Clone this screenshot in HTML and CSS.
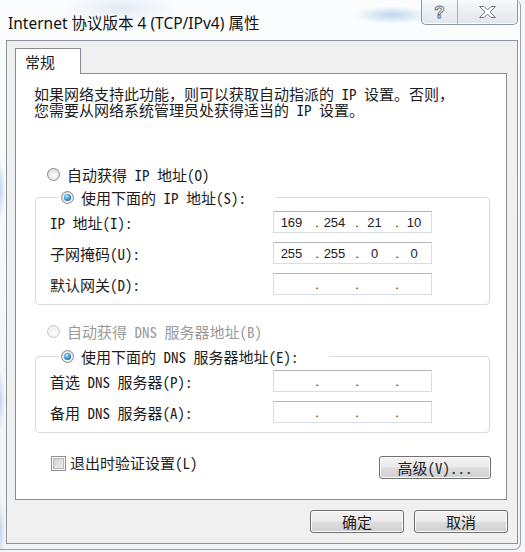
FILE: index.html
```html
<!DOCTYPE html>
<html lang="zh-CN">
<head>
<meta charset="utf-8">
<title>Internet 协议版本 4 (TCP/IPv4) 属性</title>
<link rel="stylesheet" href="styles.css">
</head>
<body>
<div class="window">
  <div class="titlebar">
    <span class="title">Internet 协议版本 4 (TCP/IPv4) 属性</span>
    <div class="caption">
      <span class="cap help"><span class="q">?</span></span>
      <span class="cap close">
        <svg width="17" height="12" viewBox="0 0 17 12"><polygon points="0.5,0.5 5,0.5 8.5,4 12,0.5 16.5,0.5 11,6 16.5,11.5 12,11.5 8.5,8 5,11.5 0.5,11.5 6,6" fill="#ffffff" stroke="#6e7782" stroke-width="1" stroke-linejoin="round"/></svg>
      </span>
    </div>
  </div>
  <div class="client">
    <div class="tabs"><div class="tab">常规</div></div>
    <div class="panel">
      <p class="desc">如果网络支持此功能<span class="fw">，</span>则可以获取自动指派的 IP 设置。否则<span class="fw">，</span><br>您需要从网络系统管理员处获得适当的 IP 设置。</p>

      <div class="radio first"><span class="rb"></span>自动获得 IP 地址(O)</div>
      <fieldset class="group g1">
        <legend><span class="radio"><span class="rb on"></span>使用下面的 IP 地址(S):</span></legend>
        <div class="row"><span class="lbl">IP 地址(I):</span>
          <div class="ip"><span class="seg s1">169</span><span class="dot">.</span><span class="seg">254</span><span class="dot">.</span><span class="seg">21</span><span class="dot">.</span><span class="seg s4">10</span></div></div>
        <div class="row"><span class="lbl">子网掩码(U):</span>
          <div class="ip"><span class="seg s1">255</span><span class="dot">.</span><span class="seg">255</span><span class="dot">.</span><span class="seg">0</span><span class="dot">.</span><span class="seg s4">0</span></div></div>
        <div class="row"><span class="lbl">默认网关(D):</span>
          <div class="ip"><span class="seg s1"></span><span class="dot">.</span><span class="seg"></span><span class="dot">.</span><span class="seg"></span><span class="dot">.</span><span class="seg s4"></span></div></div>
      </fieldset>

      <div class="radio second disabled"><span class="rb dis"></span>自动获得 DNS 服务器地址(B)</div>
      <fieldset class="group g2">
        <legend><span class="radio"><span class="rb on"></span>使用下面的 DNS 服务器地址(E):</span></legend>
        <div class="row"><span class="lbl">首选 DNS 服务器(P):</span>
          <div class="ip"><span class="seg s1"></span><span class="dot">.</span><span class="seg"></span><span class="dot">.</span><span class="seg"></span><span class="dot">.</span><span class="seg s4"></span></div></div>
        <div class="row"><span class="lbl">备用 DNS 服务器(A):</span>
          <div class="ip"><span class="seg s1"></span><span class="dot">.</span><span class="seg"></span><span class="dot">.</span><span class="seg"></span><span class="dot">.</span><span class="seg s4"></span></div></div>
      </fieldset>

      <div class="options">
        <span class="check"><span class="cb"></span>退出时验证设置(L)</span>
        <button class="btn adv">高级(V)...</button>
      </div>
    </div>
    <div class="footer">
      <button class="btn foot">确定</button>
      <button class="btn foot">取消</button>
    </div>
  </div>
</div>
</body>
</html>
```
FILE: styles.css
```css
* { box-sizing: border-box; }
html, body { margin: 0; padding: 0; }
body {
  width: 525px;
  height: 552px;
  overflow: hidden;
  background: #f3f5f7;
  font-family: "Noto Sans CJK SC", sans-serif;
  font-feature-settings: "hwid" 1;
  font-size: 15px;
  color: #1c1c1c;
}
.fw { font-feature-settings: normal; }
.window {
  width: 521px;
  height: 550px;
  padding: 0 2px 5px 6px;
  border-right: 1px solid #9aa2ab;
  border-bottom: 1px solid #9aa2ab;
  border-radius: 0 6px 7px 0;
  display: flex;
  flex-direction: column;
  background:
    radial-gradient(ellipse 38px 9px at 392px 15px, rgba(140, 185, 225, 0.55), rgba(140, 185, 225, 0) 100%),
    radial-gradient(ellipse 60px 14px at 120px 8px, rgba(200, 220, 238, 0.5), rgba(200, 220, 238, 0) 100%),
    radial-gradient(ellipse 5px 30px at 0px 190px, rgba(120, 170, 215, 0.45), rgba(120, 170, 215, 0) 100%),
    radial-gradient(ellipse 5px 30px at 0px 400px, rgba(120, 170, 215, 0.4), rgba(120, 170, 215, 0) 100%),
    radial-gradient(ellipse 5px 30px at 0px 530px, rgba(120, 170, 215, 0.4), rgba(120, 170, 215, 0) 100%),
    linear-gradient(#fbfcfd, #f1f3f5);
}
.titlebar {
  height: 40px;
  flex: none;
  display: flex;
  justify-content: space-between;
  align-items: flex-start;
}
.title {
  font-family: "Noto Sans", "Noto Sans CJK SC", sans-serif;
  font-feature-settings: normal;
  font-size: 15.5px;
  line-height: 20px;
  margin: 13px 0 0 2px;
  color: #111;
  text-shadow: 0 0 6px #fff, 0 0 3px #fff;
}
.caption {
  display: flex;
  height: 25px;
  border: 1px solid #8e97a2;
  border-top: none;
  border-radius: 0 0 5px 5px;
  overflow: hidden;
  background: linear-gradient(#f7f9fb, #e9edf1 60%, #e2e7ec);
  box-shadow: inset 0 -1px 0 #fff;
}
.cap {
  display: flex;
  align-items: center;
  justify-content: center;
}
.cap.help {
  width: 36px;
  border-right: 1px solid #a8b0b9;
}
.cap.close { width: 59px; }
.q {
  font-family: "Liberation Sans", sans-serif;
  font-weight: bold;
  font-size: 17px;
  line-height: 17px;
  color: #fff;
  -webkit-text-stroke: 1px #6e7782;
}
.client {
  flex: 1;
  background: #f0f0f0;
  border: 1px solid #8d949c;
  display: flex;
  flex-direction: column;
}
.tabs {
  padding: 7px 0 0 8px;
  display: flex;
}
.tab {
  position: relative;
  z-index: 1;
  width: 66px;
  height: 26px;
  margin-bottom: -1px;
  padding: 0 0 0 9px;
  line-height: 26px;
  background: #fff;
  border: 1px solid #898c95;
  border-bottom: none;
}
.panel {
  height: 427px;
  margin: 0 10px 0 8px;
  background: #fff;
  border: 1px solid #898c95;
  padding: 12px 0 0 18px;
}
.desc {
  margin: 0;
  line-height: 16px;
  white-space: nowrap;
}
.radio {
  display: flex;
  align-items: center;
  height: 17px;
  line-height: 17px;
  white-space: nowrap;
}
.radio.first { margin-top: 48px; padding-left: 13px; }
.radio.second { margin-top: 18px; padding-left: 13px; }
.radio.disabled { color: #9a9a9a; }
.rb {
  flex: none;
  width: 13px;
  height: 13px;
  margin-right: 7px;
  border-radius: 50%;
  border: 1px solid #8a8a8a;
  background: radial-gradient(circle at 55% 60%, #fefefe 0, #ececec 45%, #cfcfcf 100%);
  display: flex;
  align-items: center;
  justify-content: center;
}
.rb.on::after {
  content: "";
  width: 7px;
  height: 7px;
  border-radius: 50%;
  background: radial-gradient(circle at 40% 35%, #b8ecff 0, #3c9ddb 45%, #0c4a86 100%);
}
.rb.dis {
  border-color: #c9c9c9;
  background: radial-gradient(circle at 55% 60%, #fdfdfd 0, #f2f2f2 60%, #e4e4e4 100%);
}
.group {
  width: 455px;
  margin: 6px 0 0 1px;
  padding: 5px 0 9px 14px;
  border: 1px solid #d5dbe0;
  border-radius: 4px;
}
.group.g2 { margin-top: 8px; }
.group legend {
  margin-left: 9px;
  padding: 0 30px 0 2px;
}
.row {
  display: flex;
  align-items: center;
  height: 22px;
}
.row + .row { margin-top: 9px; }
.lbl {
  flex: none;
  width: 223px;
  white-space: nowrap;
}
.ip {
  width: 159px;
  height: 22px;
  display: flex;
  align-items: center;
  background: #fff;
  border: 1px solid #d9dde2;
  border-top-color: #b2b5bb;
  font-family: "Liberation Sans", sans-serif;
  font-feature-settings: normal;
  font-size: 13px;
  color: #222;
}
.seg {
  width: 34px;
  padding-right: 5px;
  text-align: center;
}
.seg.s1 { width: 40px; }
.seg.s4 { width: 31px; padding-right: 3px; }
.dot {
  width: 6px;
  text-align: center;
}
.options {
  margin-top: 22px;
  padding: 0 15px 0 17px;
  display: flex;
  justify-content: space-between;
  align-items: flex-start;
}
.check {
  display: flex;
  align-items: center;
  height: 16px;
  line-height: 16px;
  white-space: nowrap;
}
.cb {
  width: 15px;
  height: 15px;
  margin-right: 4px;
  border: 1px solid #8f8f8f;
  background: linear-gradient(135deg, #c9c9c9, #f6f6f6);
  box-shadow: inset 0 0 0 1px #fff, inset 0 0 0 2px #b7b7b7;
}
.btn {
  font: inherit;
  font-feature-settings: "hwid" 1;
  color: #1c1c1c;
  height: 23px;
  padding: 0;
  border: 1px solid #707070;
  border-radius: 3px;
  background: linear-gradient(#f2f2f2 0%, #ebebeb 48%, #dddddd 52%, #cfcfcf 100%);
  box-shadow: inset 0 0 0 1px #fbfbfb;
  line-height: 21px;
}
.btn.adv {
  width: 112px;
  margin-top: 1px;
}
.footer {
  margin-top: 10px;
  padding-right: 9px;
  display: flex;
  justify-content: flex-end;
  gap: 10px;
}
.btn.foot { width: 94px; }
```
